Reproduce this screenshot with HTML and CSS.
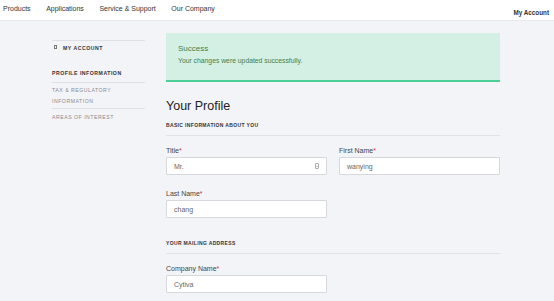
FILE: index.html
```html
<!DOCTYPE html>
<html>
<head>
<meta charset="utf-8">
<link rel="stylesheet" href="styles.css">
</head>
<body>
<header class="topnav">
  <nav class="menu">
    <span>Products</span>
    <span>Applications</span>
    <span>Service &amp; Support</span>
    <span>Our Company</span>
  </nav>
  <div class="account">My Account</div>
</header>
<div class="page">
  <aside class="sidebar">
    <div class="side-head"><span class="side-icon"></span>MY ACCOUNT</div>
    <div class="side-item active">PROFILE INFORMATION</div>
    <div class="side-item">TAX &amp; REGULATORY<br>INFORMATION</div>
    <div class="side-item last">AREAS OF INTEREST</div>
  </aside>
  <main class="content">
    <div class="alert">
      <div class="alert-title">Success</div>
      <div class="alert-msg">Your changes were updated successfully.</div>
    </div>
    <h1 class="title">Your Profile</h1>
    <div class="section">BASIC INFORMATION ABOUT YOU</div>
    <div class="grid">
      <div class="field">
        <label>Title<span class="req">*</span></label>
        <div class="input select">Mr.<span class="spin"></span></div>
      </div>
      <div class="field">
        <label>First Name<span class="req">*</span></label>
        <div class="input">wanying</div>
      </div>
      <div class="field">
        <label>Last Name<span class="req">*</span></label>
        <div class="input">chang</div>
      </div>
    </div>
    <div class="section mail">YOUR MAILING ADDRESS</div>
    <div class="grid">
      <div class="field">
        <label>Company Name<span class="req">*</span></label>
        <div class="input">Cytiva</div>
      </div>
    </div>
  </main>
</div>
</body>
</html>
```
FILE: styles.css
```css
* { box-sizing: border-box; }
html, body { margin: 0; padding: 0; }
body {
  background: #f3f4f8;
  font-family: "Liberation Sans", Arial, sans-serif;
  color: #333;
  width: 554px;
  height: 301px;
  overflow: hidden;
}
.topnav {
  background: #fff;
  height: 21px;
  border-bottom: 1px solid #e9eaef;
  display: flex;
  justify-content: space-between;
}
.menu {
  display: flex;
  gap: 15.5px;
  padding-left: 3px;
  padding-top: 5px;
  font-size: 7px;
  color: #333;
}
.account {
  font-size: 6.3px;
  font-weight: bold;
  color: #333;
  padding-top: 9px;
  padding-right: 5px;
}
.page {
  display: flex;
}
.sidebar {
  width: 93px;
  margin-left: 52px;
  margin-top: 19px;
  border-top: 1px solid #dfe0e5;
  font-size: 5.2px;
  letter-spacing: 0.5px;
}
.side-head {
  font-weight: bold;
  color: #333;
  padding-top: 4px;
  height: 24px;
  display: flex;
  align-items: flex-start;
}
.side-icon {
  display: inline-block;
  width: 3px;
  height: 4px;
  border: 0.6px solid #777;
  margin: 0 6px 0 2px;
}
.side-item {
  color: #8a8a8e;
  border-bottom: 1px solid #dfe0e5;
  line-height: 11px;
  padding: 2px 0 1px;
}
.side-item.active {
  color: #333;
  font-weight: bold;
  padding: 3px 0 3px;
}
.side-item.last { border-bottom: none; padding-top: 3px; }
.content {
  width: 334px;
  margin-left: 21px;
  padding-top: 12px;
}
.alert {
  background: #d4f0e4;
  border-bottom: 2px solid #4ccf96;
  height: 49px;
  padding: 11px 12px 0;
  color: #3f7f4a;
}
.alert-title { font-size: 8px; }
.alert-msg { font-size: 6.8px; margin-top: 4px; }
.title {
  font-size: 12.5px;
  font-weight: normal;
  color: #222;
  margin: 16px 0 0;
  line-height: 16px;
}
.section {
  font-size: 5px;
  font-weight: bold;
  color: #333;
  letter-spacing: 0.35px;
  border-bottom: 1px solid #e1e2e7;
  padding: 8px 0 7px;
}
.section.mail { margin-top: 14px; }
.grid {
  display: grid;
  grid-template-columns: 161px 161px;
  column-gap: 12px;
  row-gap: 14px;
  margin-top: 10px;
}
.field label {
  display: block;
  font-size: 7px;
  color: #444;
  line-height: 9px;
  margin-bottom: 2px;
}
.req { color: #d0343a; }
.input {
  background: #fff;
  border: 1px solid #d6d8de;
  border-radius: 1px;
  height: 18px;
  font-size: 7px;
  color: #666;
  padding-left: 7px;
  display: flex;
  align-items: center;
  justify-content: space-between;
}
.select { padding-right: 7px; }
.spin {
  width: 4px;
  height: 6px;
  border: 0.7px solid #aaa;
  border-radius: 1px;
  background: linear-gradient(#aaa, #aaa) center / 100% 0.6px no-repeat;
}
```
